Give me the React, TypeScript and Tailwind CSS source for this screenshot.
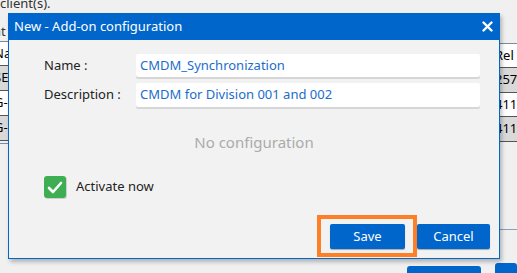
import React from 'react';

const font = { fontFamily: '"Noto Sans", "Open Sans", sans-serif' };

const Row: React.FC<{ text: string; gray?: boolean; header?: boolean }> = ({ text, gray, header }) => (
  <div
    className={`h-[25px] border-b border-[#555] flex items-center text-[13px] text-black ${
      gray ? 'bg-[#d9d9d9]' : 'bg-white'
    } ${header ? 'border-t border-t-[#7a8ca0]' : ''}`}
  >
    {text}
  </div>
);

const App: React.FC = () => {
  return (
    <div className="relative w-[517px] h-[273px] overflow-hidden bg-[#f0f0f0]" style={font}>
      {/* page behind the dialog */}
      <div className="flex w-full h-full">
        <div className="w-[26px] flex flex-col">
          <div className="h-[22px] text-[13px] leading-[10px] text-[#333] -mt-[2px]">client(s).</div>
          <div className="h-[21px] text-[13px] text-[#333] -ml-[7px] pt-[2px]">nt</div>
          <div className="-ml-[6px]">
            <Row text="Na" header />
            <Row text="SE" gray />
            <Row text="G-" />
            <Row text="G-" gray />
          </div>
          <div className="mt-[2px] h-px bg-[#6c8fb8]" />
        </div>
        <div className="flex-1" />
        <div className="w-[22px] flex flex-col pt-[43px]">
          <Row text="Rel" header />
          <Row text="257" gray />
          <Row text="411" />
          <Row text="411" gray />
          <div className="mt-[87px] h-px bg-[#8aa0b8]" />
          <div className="mt-[33px] h-[10px] bg-[#0066cc] rounded-t-[3px]" />
        </div>
      </div>
      <div className="absolute left-[407px] top-[266px] w-[74px] h-[10px] bg-[#0066cc] rounded-t-[3px]" />

      {/* dialog */}
      <div className="absolute left-[8px] top-[13px] w-[492px] h-[246px] border border-[#0066cc] bg-[#f2f2f2] shadow-[2px_3px_4px_rgba(0,0,0,0.25)] flex flex-col">
        <div className="h-[27px] bg-[#0066cc] flex items-center justify-between pl-[6px] pr-[7px] -mx-px -mt-px">
          <span className="text-white text-[13px]">New - Add-on configuration</span>
          <svg width="11" height="11" viewBox="0 0 11 11">
            <path d="M1.5 1.5 L9.5 9.5 M9.5 1.5 L1.5 9.5" stroke="white" strokeWidth="2.4" strokeLinecap="round" />
          </svg>
        </div>
        <div className="flex flex-col pl-[35px] pr-[19px] pt-[14px] flex-1">
          <div className="flex items-center h-[23px]">
            <span className="w-[92px] text-[13px] text-[#222]">Name :</span>
            <div className="flex-1 h-[23px] bg-white rounded-[2px] shadow-[0_2px_0_#d6d6d6] flex items-center pl-[4px] text-[13px] text-[#1a6dcc]">
              CMDM_Synchronization
            </div>
          </div>
          <div className="flex items-center h-[24px] mt-[6px]">
            <span className="w-[92px] text-[13px] text-[#222]">Description :</span>
            <div className="flex-1 h-[24px] bg-white rounded-[2px] shadow-[0_2px_0_#d6d6d6] flex items-center pl-[4px] text-[13px] text-[#1a6dcc]">
              CMDM for Division 001 and 002
            </div>
          </div>
          <div className="mt-[24px] text-center text-[15px] text-[#ababab] pr-[16px] leading-[22px]">No configuration</div>
          <div className="flex items-center mt-[23px]">
            <div className="w-[22px] h-[22px] rounded-[3px] bg-[#3dae52] shadow-[1px_1px_0_#cfcfcf] flex items-center justify-center">
              <svg width="16" height="13" viewBox="0 0 16 13">
                <path d="M2 7 L6 11 L14 2" stroke="white" strokeWidth="2.6" fill="none" strokeLinecap="round" strokeLinejoin="round" />
              </svg>
            </div>
            <span className="ml-[10px] text-[13px] text-[#222]">Activate now</span>
          </div>
          <div className="flex justify-end items-start mt-[17px] -mr-[10px]">
            <div className="border-[4px] border-[#ff7f27] pl-[9px] pr-[8px] pt-[5px] pb-[4px]">
              <button className="block w-[75px] h-[25px] rounded-[2px] bg-[#0066cc] text-white text-[13px] shadow-[0_1px_1px_rgba(0,0,0,0.3)]">
                Save
              </button>
            </div>
            <button className="mt-[9px] w-[73px] h-[25px] rounded-[2px] bg-[#0066cc] text-white text-[13px] shadow-[0_1px_1px_rgba(0,0,0,0.3)]">
              Cancel
            </button>
          </div>
        </div>
      </div>
    </div>
  );
};

export default App;
